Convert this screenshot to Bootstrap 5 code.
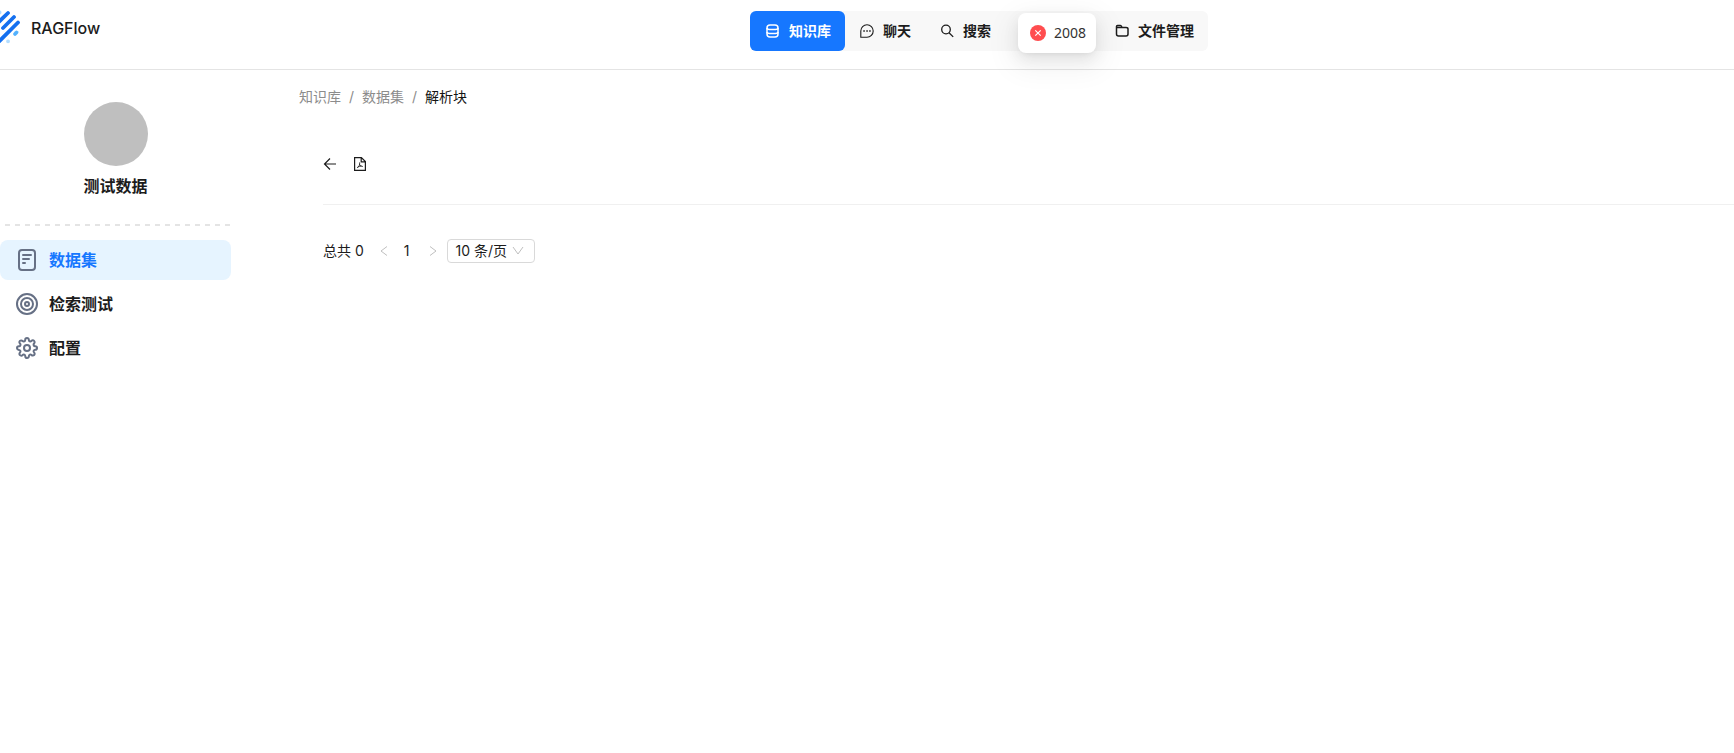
<!DOCTYPE html>
<html lang="zh-CN">
<head>
<meta charset="utf-8">
<meta name="viewport" content="width=device-width, initial-scale=1">
<title>RAGFlow</title>
<link href="https://cdn.jsdelivr.net/npm/bootstrap@5.3.0/dist/css/bootstrap.min.css" rel="stylesheet">
<style>
body{font-family:Inter,"Noto Sans CJK SC",sans-serif;font-size:14px;line-height:22px;color:#1c1c1c;background:#fff}
a{text-decoration:none;color:inherit}
svg{display:block;flex:none;fill:none;stroke:currentColor}
.topbar{height:70px;border-bottom:1px solid #e4e4e4;padding-top:11px}
.brand{width:calc(50% - 117px);height:34px;gap:10px;font-size:16px;font-weight:500}
.brand svg{margin-left:-11px}
.main-tabs{height:40px;border-radius:6px;background:#f8f8f8}
.main-tabs .nav-link{height:40px;padding:0 14px 0 15px;gap:9px;border-radius:6px;font-weight:700;color:#1c1c1c}
.main-tabs .nav-link.active{background:#1677ff;color:#fff}
.agent-tab{width:95px}
.notice{position:absolute;top:2px;left:268px;width:78px;height:40px;border-radius:8px;gap:8px;padding-left:12px;background:#fff;font-family:"Noto Sans",sans-serif;color:#333;box-shadow:0 6px 16px rgba(0,0,0,.08),0 3px 6px -4px rgba(0,0,0,.12),0 9px 28px 8px rgba(0,0,0,.05)}
.sidebar{width:231px;flex:none;padding-top:32px;font-size:16px;font-weight:700}
.avatar{width:64px;height:64px;background:#bfbfbf}
.dashes{height:2px;margin:26px 0 14px 5px;background:repeating-linear-gradient(90deg,#e4e4e4 0 5px,transparent 5px 10px)}
.sidebar .nav-link{height:40px;padding:0 15px;gap:10px;border-radius:8px;color:#1c1c1c}
.sidebar .nav-link svg{color:#667085}
.sidebar .nav-link.active{background:#e6f4ff;color:#1677ff}
.content{padding:16px 0 0 68px}
.breadcrumb{--bs-breadcrumb-divider-color:#8c8c8c;--bs-breadcrumb-item-padding-x:8px;color:#8c8c8c}
.breadcrumb .active{color:#141414}
.chunk-area{padding-left:24px}
.tools{gap:16px;height:65px;margin-top:32px;padding-bottom:16px;border-bottom:1px solid #f0f0f0}
.tools button,.pager button{border:0;background:none;padding:0;color:#1c1c1c}
.pager{margin-top:34px;height:24px}
.pager button{width:24px;height:24px;color:#bfbfbf}
.page-size{position:relative;margin-left:2px;width:88px}
.page-size select{width:100%;height:24px;border:1px solid #d9d9d9;border-radius:4px;appearance:none;background:#fff;padding:0 20px 0 7px;line-height:22px;color:inherit}
.page-size svg{position:absolute;right:11px;top:7px;color:#bfbfbf;pointer-events:none}
</style>
</head>
<body>
<header class="topbar d-flex align-items-start">
  <a href="#" class="brand d-flex align-items-center">
    <svg width="32" height="36" viewBox="0 0 32 36" stroke-width="3.800" stroke-linecap="round" aria-hidden="true">
      <path stroke="#1570ef" d="M4 17.500 19 3M14 18 25 7M8 33.500 29 12.500"/>
      <path stroke="#53b1fd" d="m26 24 1.500-1.500"/><path stroke="#b2ddff" d="M10.500 2.500h.1M19 31.300h.1"/>
    </svg>
    <span>RAGFlow</span>
  </a>
  <nav class="main-tabs d-flex position-relative" aria-label="主导航">
    <a href="#" class="nav-link active d-flex align-items-center" aria-current="page">
      <svg width="15" height="14" viewBox="0 0 15 14" stroke-width="1.500"><rect x="2" y="1" width="11" height="12" rx="3"/><path d="M2 4q0 1.500 2.500 1.500h6Q13 5.500 13 4M2 8q0 1.500 2.500 1.500h6Q13 9.500 13 8"/></svg>
      知识库</a>
    <a href="#" class="nav-link d-flex align-items-center">
      <svg width="14" height="14" viewBox="0 0 14 14" stroke-width="1.100"><path d="M.8 13.200V7A6.200 6.200 0 1 1 7 13.200z"/><path stroke-width="1.500" d="M3.300 7h1.500M6.300 7h1.500M9.200 7h1.500"/></svg>
      聊天</a>
    <a href="#" class="nav-link d-flex align-items-center">
      <svg width="14" height="14" viewBox="0 0 14 14" stroke-width="1.300"><circle cx="6" cy="5.500" r="4.300"/><path d="m9 8.700 4.200 4.200"/></svg>
      搜索</a>
    <a href="#" class="nav-link agent-tab" aria-label="Agent"></a>
    <a href="#" class="nav-link d-flex align-items-center">
      <svg width="14" height="14" viewBox="0 0 14 14" stroke-width="1.500" stroke-linejoin="round"><path d="M1.500 4V2.500Q1.500 1.500 2.500 1.500h3Q6.500 1.500 7 3.500h4q2 0 2 1.500v5q0 2-2 2H3.500q-2 0-2-2V3.500H7"/></svg>
      文件管理</a>
    <div class="notice d-flex align-items-center" role="alert">
      <svg width="16" height="16" viewBox="0 0 16 16"><circle cx="8" cy="8" r="8" fill="#ff4d4f" stroke="none"/><path stroke="#fff" stroke-width="1.200" d="m5.300 5.300 5.400 5.400m0-5.400-5.400 5.400"/></svg>
      <span>2008</span>
    </div>
  </nav>
</header>
<div class="d-flex">
  <aside class="sidebar">
    <div class="d-flex flex-column align-items-center">
      <div class="avatar rounded-circle"></div>
      <div class="mt-2 lh-base">测试数据</div>
    </div>
    <div class="dashes"></div>
    <nav class="nav flex-column gap-1" aria-label="知识库">
      <a href="#" class="nav-link active d-flex align-items-center" aria-current="page">
        <svg width="24" height="24" viewBox="0 0 24 24" stroke-width="2" stroke-linecap="round"><rect x="4" y="2" width="16" height="20" rx="3"/><path d="M8 7h8M8 11h6M8 15h2"/></svg>
        数据集</a>
      <a href="#" class="nav-link d-flex align-items-center">
        <svg width="24" height="24" viewBox="0 0 24 24" stroke-width="2"><circle cx="12" cy="12" r="10"/><circle cx="12" cy="12" r="6"/><circle cx="12" cy="12" r="2"/></svg>
        检索测试</a>
      <a href="#" class="nav-link d-flex align-items-center">
        <svg width="24" height="24" viewBox="0 0 24 24" stroke-width="2" stroke-linejoin="round"><circle cx="12" cy="12" r="3"/><path d="M18.730 14.730a1.500 1.500 0 0 0 .3 1.650l.05.050a1.820 1.820 0 1 1-2.570 2.570l-.06-.05a1.500 1.500 0 0 0-2.540 1.060v.160a1.820 1.820 0 0 1-3.640 0v-.08a1.500 1.500 0 0 0-2.630-1.080l-.06.050a1.820 1.820 0 1 1-2.570-2.570l.05-.06a1.500 1.500 0 0 0-1.060-2.540h-.16a1.820 1.820 0 0 1 0-3.640h.08a1.500 1.500 0 0 0 1.080-2.630l-.05-.06a1.820 1.820 0 1 1 2.570-2.570l.06.050a1.500 1.500 0 0 0 1.650.3h.07a1.500 1.500 0 0 0 .91-1.370v-.16a1.820 1.820 0 0 1 3.640 0v.08a1.500 1.500 0 0 0 2.550 1.070l.06-.05a1.820 1.820 0 1 1 2.570 2.570l-.05.060a1.500 1.500 0 0 0-.3 1.650v.07a1.500 1.500 0 0 0 1.370.910h.16a1.820 1.820 0 0 1 0 3.640h-.08a1.500 1.500 0 0 0-1.370.910z"/></svg>
        配置</a>
    </nav>
  </aside>
  <main class="content flex-grow-1">
    <nav aria-label="breadcrumb">
      <ol class="breadcrumb mb-0">
        <li class="breadcrumb-item"><a href="#">知识库</a></li>
        <li class="breadcrumb-item"><a href="#">数据集</a></li>
        <li class="breadcrumb-item active" aria-current="page">解析块</li>
      </ol>
    </nav>
    <section class="chunk-area">
      <div class="tools d-flex align-items-center">
        <button type="button" aria-label="返回"><svg width="14" height="14" viewBox="0 0 14 14" stroke-width="1.200"><path d="M13 7H1.500M7 1.500 1.500 7 7 12.500"/></svg></button>
        <button type="button" aria-label="PDF"><svg width="14" height="14" viewBox="0 0 14 14" stroke-width="1.200"><path d="M1.600.6h6.800l4 4v8.800H1.600zM8.200.6v4.200h4.200"/><path stroke-width=".9" d="M6.500 5.500c.6 2-.2 3.800-2.300 5.200M6.600 7.500c.5 1 1.500 1.800 3.200 2M4.500 10.300c1-.8 2.500-1.300 4-1.300"/></svg></button>
      </div>
      <div class="pager d-flex align-items-center">
        <span class="me-2">总共 0</span>
        <button type="button" class="d-flex align-items-center justify-content-center" aria-label="上一页" disabled><svg width="8" height="12" viewBox="0 0 8 12"><path d="M7 1.500 1 6l6 4.500"/></svg></button>
        <a href="#" class="text-center px-2 me-1">1</a>
        <button type="button" class="d-flex align-items-center justify-content-center" aria-label="下一页" disabled><svg width="8" height="12" viewBox="0 0 8 12"><path d="m1 1.500 6 4.500-6 4.500"/></svg></button>
        <div class="page-size">
          <select aria-label="每页条数"><option>10 条/页</option><option>20 条/页</option><option>50 条/页</option></select>
          <svg width="12" height="10" viewBox="0 0 12 10"><path d="m1 1 5 7 5-7"/></svg>
        </div>
      </div>
    </section>
  </main>
</div>
<script src="https://cdn.jsdelivr.net/npm/bootstrap@5.3.0/dist/js/bootstrap.bundle.min.js"></script>
</body>
</html>
